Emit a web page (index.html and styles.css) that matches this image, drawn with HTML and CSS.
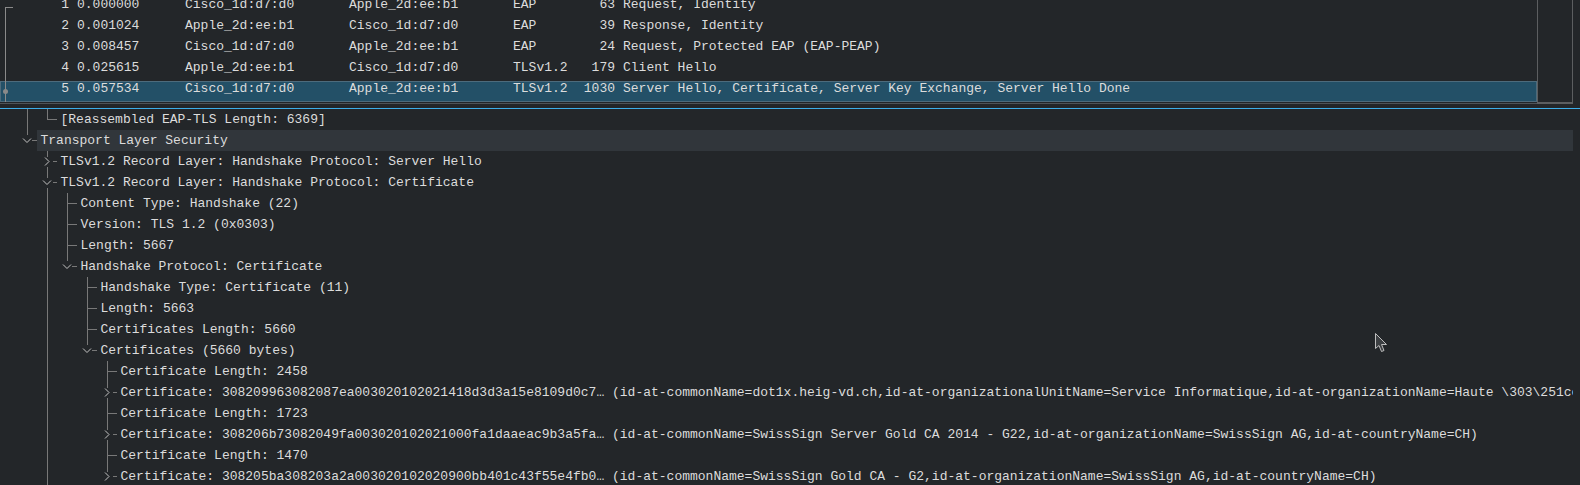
FILE: index.html
```html
<!DOCTYPE html>
<html>
<head>
<meta charset="utf-8">
<link rel="stylesheet" href="styles.css">
</head>
<body>
<div class="app">
  <div class="plist">
    <div class="prows">
      <div class="prows-inner">
        <div class="prow"><span class="mark first"></span><span class="num">1</span><span class="time">0.000000</span><span class="c">Cisco_1d:d7:d0</span><span class="c">Apple_2d:ee:b1</span><span class="c">EAP</span><span class="len">63</span><span class="info">Request, Identity</span></div>
        <div class="prow"><span class="mark mid"></span><span class="num">2</span><span class="time">0.001024</span><span class="c">Apple_2d:ee:b1</span><span class="c">Cisco_1d:d7:d0</span><span class="c">EAP</span><span class="len">39</span><span class="info">Response, Identity</span></div>
        <div class="prow"><span class="mark mid"></span><span class="num">3</span><span class="time">0.008457</span><span class="c">Cisco_1d:d7:d0</span><span class="c">Apple_2d:ee:b1</span><span class="c">EAP</span><span class="len">24</span><span class="info">Request, Protected EAP (EAP-PEAP)</span></div>
        <div class="prow"><span class="mark mid"></span><span class="num">4</span><span class="time">0.025615</span><span class="c">Apple_2d:ee:b1</span><span class="c">Cisco_1d:d7:d0</span><span class="c">TLSv1.2</span><span class="len">179</span><span class="info">Client Hello</span></div>
        <div class="prow selected"><span class="mark mid dot"></span><span class="num">5</span><span class="time">0.057534</span><span class="c">Cisco_1d:d7:d0</span><span class="c">Apple_2d:ee:b1</span><span class="c">TLSv1.2</span><span class="len">1030</span><span class="info">Server Hello, Certificate, Server Key Exchange, Server Hello Done</span></div>
      </div>
    </div>
    <div class="vbar"></div>
  </div>
  <div class="splitter"></div>
  <div class="tree">
    <div class="trow"><span class="ind line"></span><span class="node leaf"></span><span class="label">[Reassembled EAP-TLS Length: 6369]</span></div>
    <div class="trow"><span class="node open"><svg class="arr" width="10" height="11" viewBox="0 0 10 11"><path d="M1 3.5 L5 7.5 L9 3.5"/></svg></span><span class="label hover">Transport Layer Security</span></div>
    <div class="trow"><span class="ind"></span><span class="node closed more"><svg class="arr" width="10" height="11" viewBox="0 0 10 11"><path d="M3 1.5 L7 5.5 L3 9.5"/></svg></span><span class="label">TLSv1.2 Record Layer: Handshake Protocol: Server Hello</span></div>
    <div class="trow"><span class="ind"></span><span class="node open more"><svg class="arr" width="10" height="11" viewBox="0 0 10 11"><path d="M1 3.5 L5 7.5 L9 3.5"/></svg></span><span class="label">TLSv1.2 Record Layer: Handshake Protocol: Certificate</span></div>
    <div class="trow"><span class="ind"></span><span class="ind line"></span><span class="node leaf more"></span><span class="label">Content Type: Handshake (22)</span></div>
    <div class="trow"><span class="ind"></span><span class="ind line"></span><span class="node leaf more"></span><span class="label">Version: TLS 1.2 (0x0303)</span></div>
    <div class="trow"><span class="ind"></span><span class="ind line"></span><span class="node leaf more"></span><span class="label">Length: 5667</span></div>
    <div class="trow"><span class="ind"></span><span class="ind line"></span><span class="node open"><svg class="arr" width="10" height="11" viewBox="0 0 10 11"><path d="M1 3.5 L5 7.5 L9 3.5"/></svg></span><span class="label">Handshake Protocol: Certificate</span></div>
    <div class="trow"><span class="ind"></span><span class="ind line"></span><span class="ind"></span><span class="node leaf more"></span><span class="label">Handshake Type: Certificate (11)</span></div>
    <div class="trow"><span class="ind"></span><span class="ind line"></span><span class="ind"></span><span class="node leaf more"></span><span class="label">Length: 5663</span></div>
    <div class="trow"><span class="ind"></span><span class="ind line"></span><span class="ind"></span><span class="node leaf more"></span><span class="label">Certificates Length: 5660</span></div>
    <div class="trow"><span class="ind"></span><span class="ind line"></span><span class="ind"></span><span class="node open"><svg class="arr" width="10" height="11" viewBox="0 0 10 11"><path d="M1 3.5 L5 7.5 L9 3.5"/></svg></span><span class="label">Certificates (5660 bytes)</span></div>
    <div class="trow"><span class="ind"></span><span class="ind line"></span><span class="ind"></span><span class="ind"></span><span class="node leaf more"></span><span class="label">Certificate Length: 2458</span></div>
    <div class="trow"><span class="ind"></span><span class="ind line"></span><span class="ind"></span><span class="ind"></span><span class="node closed more"><svg class="arr" width="10" height="11" viewBox="0 0 10 11"><path d="M3 1.5 L7 5.5 L3 9.5"/></svg></span><span class="label">Certificate: 308209963082087ea003020102021418d3d3a15e8109d0c7… (id-at-commonName=dot1x.heig-vd.ch,id-at-organizationalUnitName=Service Informatique,id-at-organizationName=Haute \303\251cole d'Ing\303\251nierie et de Gestion du Canton de Vaud,id-at-localityName=Yverdon-les-Bains,id-at-stateOrProvinceName=Vaud,id-at-countryName=CH)</span></div>
    <div class="trow"><span class="ind"></span><span class="ind line"></span><span class="ind"></span><span class="ind"></span><span class="node leaf more"></span><span class="label">Certificate Length: 1723</span></div>
    <div class="trow"><span class="ind"></span><span class="ind line"></span><span class="ind"></span><span class="ind"></span><span class="node closed more"><svg class="arr" width="10" height="11" viewBox="0 0 10 11"><path d="M3 1.5 L7 5.5 L3 9.5"/></svg></span><span class="label">Certificate: 308206b73082049fa003020102021000fa1daaeac9b3a5fa… (id-at-commonName=SwissSign Server Gold CA 2014 - G22,id-at-organizationName=SwissSign AG,id-at-countryName=CH)</span></div>
    <div class="trow"><span class="ind"></span><span class="ind line"></span><span class="ind"></span><span class="ind"></span><span class="node leaf more"></span><span class="label">Certificate Length: 1470</span></div>
    <div class="trow"><span class="ind"></span><span class="ind line"></span><span class="ind"></span><span class="ind"></span><span class="node closed"><svg class="arr" width="10" height="11" viewBox="0 0 10 11"><path d="M3 1.5 L7 5.5 L3 9.5"/></svg></span><span class="label">Certificate: 308205ba308203a2a003020102020900bb401c43f55e4fb0… (id-at-commonName=SwissSign Gold CA - G2,id-at-organizationName=SwissSign AG,id-at-countryName=CH)</span></div>
  </div>
  <svg class="cursor" width="14" height="22" viewBox="0 0 14 22"><path d="M0.5 0.5 L0.5 15.5 L4 12.5 L6.5 18.5 L9 17.5 L6.5 11.5 L11.5 11.5 Z"/></svg>
</div>
</body>
</html>
```
FILE: styles.css
```css
html, body {
  margin: 0;
  padding: 0;
  background: #232629;
}
body {
  width: 1580px;
  height: 485px;
  overflow: hidden;
  font-family: "Liberation Mono", "DejaVu Sans Mono", monospace;
  font-size: 13px;
  color: #dcdcdc;
}
.app {
  position: relative;
  width: 1580px;
  height: 485px;
}
.plist {
  display: flex;
  height: 104px;
}
.prows {
  width: 1537px;
  height: 103px;
  overflow: hidden;
  border-bottom: 1px solid #4f5357;
}
.prows-inner {
  margin-top: -3px;
}
.prow {
  display: grid;
  grid-template-columns: 11px 58px 116px 164px 164px 47px 55px 1fr;
  height: 21px;
  line-height: 16px;
  white-space: nowrap;
}
.prow.selected {
  background: #235067;
  box-shadow: inset 0 0 0 1px #4d6b7c;
}
.mark {
  position: relative;
}
.mark::before {
  content: "";
  position: absolute;
  left: 5px;
  width: 1px;
  background: #8a8a8a;
  top: 0;
  bottom: 0;
}
.mark.first::before {
  top: 10px;
}
.mark.first::after {
  content: "";
  position: absolute;
  left: 5px;
  top: 10px;
  width: 8px;
  height: 1px;
  background: #8a8a8a;
}
.mark.dot::after {
  content: "";
  position: absolute;
  left: 3px;
  top: 8px;
  width: 5px;
  height: 5px;
  border-radius: 50%;
  background: #8a8a8a;
}
.num, .len {
  text-align: right;
}
.time {
  padding-left: 8px;
}
.info {
  padding-left: 8px;
}
.vbar {
  width: 34px;
  height: 102px;
  border-left: 1px solid #5c5e60;
  border-right: 1px solid #5c5e60;
  border-bottom: 2px solid #5c5e60;
}
.splitter {
  margin-top: 4px;
  height: 1px;
  background: #3daee9;
}
.tree {
  width: 1556px;
  padding-left: 17px;
  overflow: hidden;
}
.trow {
  display: flex;
  height: 21px;
}
.ind, .node {
  flex: none;
  width: 20px;
  height: 21px;
  background-repeat: no-repeat;
}
.ind.line {
  background-image: linear-gradient(#787878, #787878);
  background-position: 10px 0;
  background-size: 1px 21px;
}
.node.leaf {
  background-image: linear-gradient(#787878, #787878), linear-gradient(#787878, #787878);
  background-position: 10px 0, 10px 10px;
  background-size: 1px 11px, 10px 1px;
}
.node.leaf.more {
  background-size: 1px 21px, 10px 1px;
}
.node.open, .node.closed {
  background-image: linear-gradient(#787878, #787878), linear-gradient(#787878, #787878);
  background-position: 10px 0, 15px 10px;
  background-size: 1px 5px, 5px 1px;
}
.node.closed {
  background-position: 10px 0, 16px 10px;
  background-size: 1px 6px, 4px 1px;
}
.node.open.more, .node.closed.more {
  background-image: linear-gradient(#787878, #787878), linear-gradient(#787878, #787878), linear-gradient(#787878, #787878);
  background-position: 10px 0, 16px 10px, 10px 16px;
  background-size: 1px 6px, 4px 1px, 1px 5px;
}
.arr {
  display: block;
  margin: 5px 0 0 5px;
  fill: none;
  stroke: #c4c4c4;
  stroke-width: 1;
}
.label {
  flex: 1;
  min-width: 0;
  height: 21px;
  line-height: 21px;
  padding-left: 3.5px;
  white-space: nowrap;
  overflow: hidden;
}
.label.hover {
  background: #31363b;
}
.cursor {
  position: absolute;
  left: 1375px;
  top: 333px;
  fill: #3c3f42;
  stroke: #bdbdbd;
  stroke-width: 1;
}
```
